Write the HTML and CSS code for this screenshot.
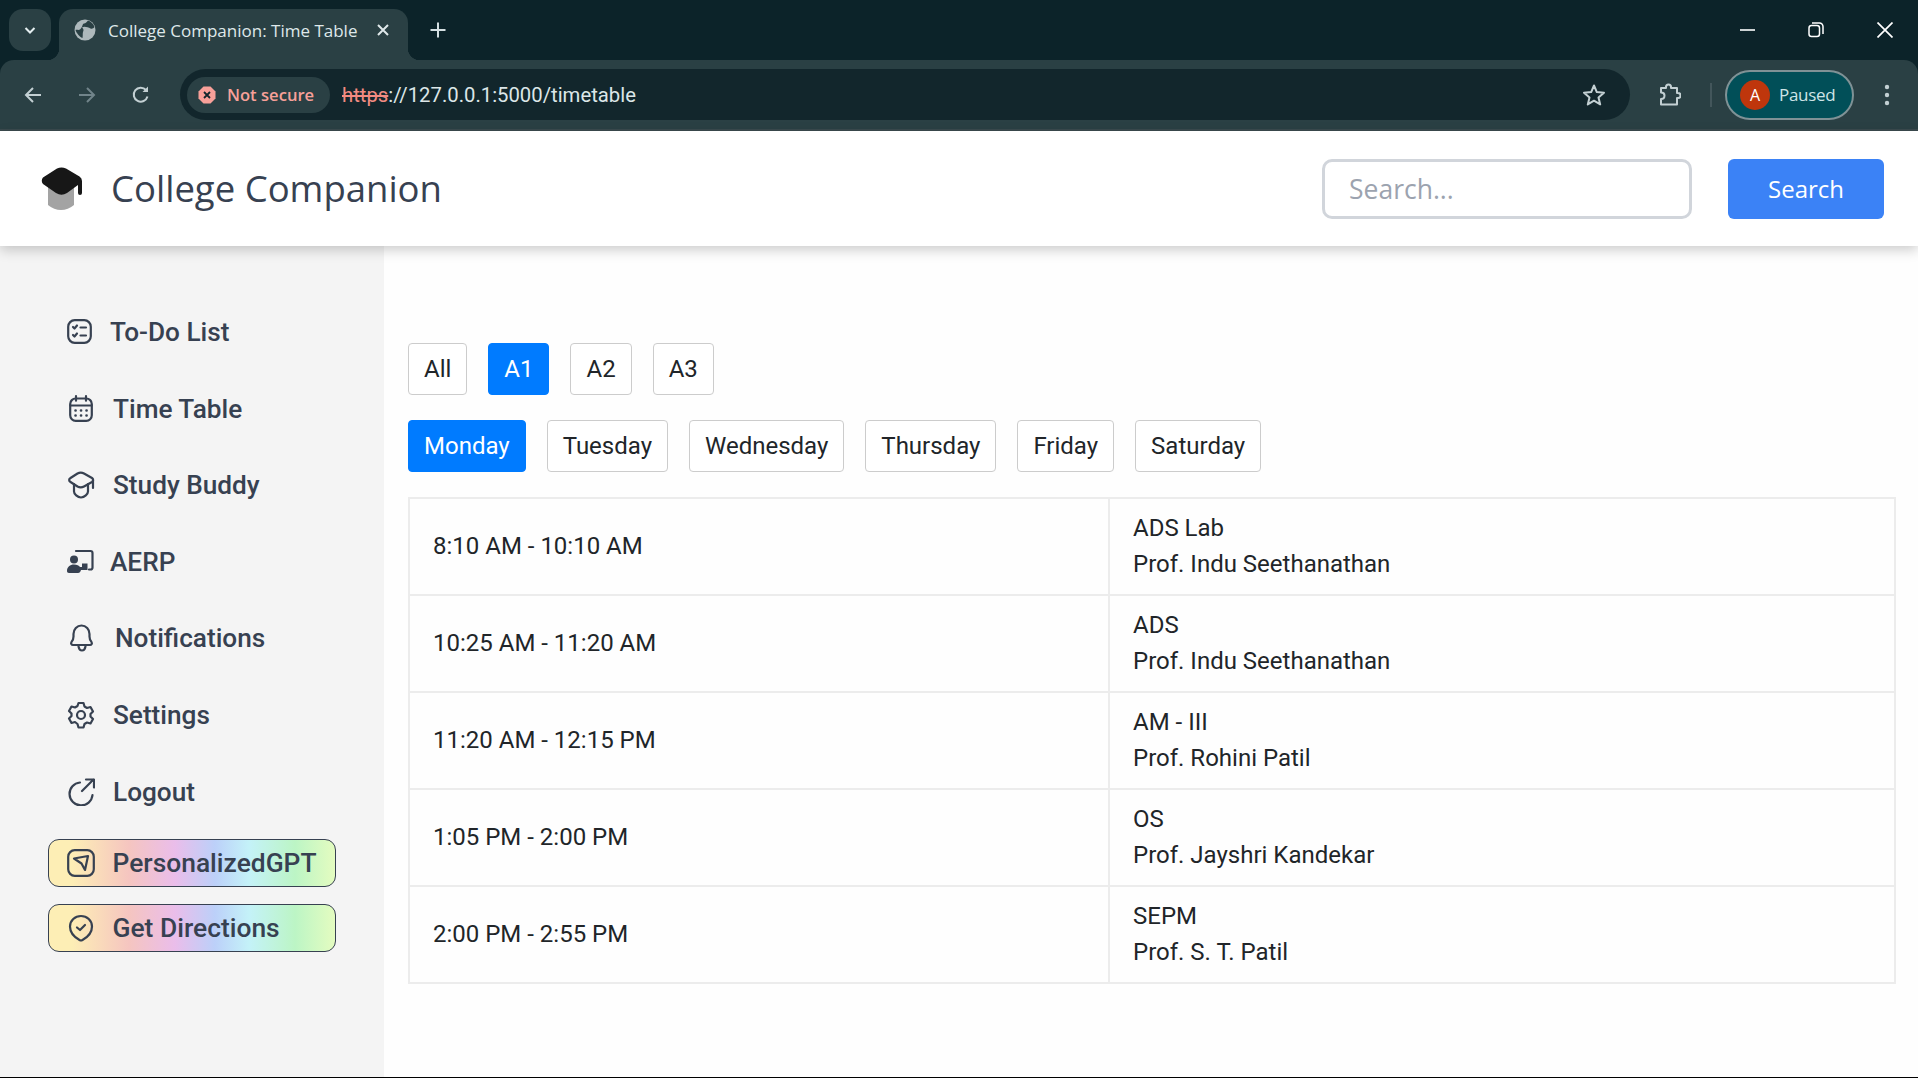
FILE: index.html
```html
<!DOCTYPE html>
<html lang="en">
<head>
<meta charset="utf-8">
<title>College Companion: Time Table</title>
<link rel="stylesheet" href="styles.css">
</head>
<body>
<div class="browser">
  <div class="tabstrip">
    <div class="tabsearch">
      <svg width="16" height="16" viewBox="0 0 16 16"><path d="M3.500 6 8 10.500 12.500 6" fill="none" stroke="#e4eef0" stroke-width="2"/></svg>
    </div>
    <div class="tab">
      <svg class="tab-globe" width="22" height="22" viewBox="0 0 22 22"><circle cx="11" cy="11" r="10.500" fill="#aeb9bc"/><path d="M14 1.500c3 1 5.500 3.500 6.500 6.500-1 1.500-2.500 2-4 1.500-2.500-1-6-2.500-8.500-1 1.500 1 2 3 1 4.500-.5 1.500 0 3-.5 6-3-1-6-5-7-8 1.500-.5 3 .5 4.500-.5C9 8 8 5 10 4.500c1.500 0 3-1.500 4-3z" fill="#2a4044"/></svg>
      <span class="tab-title">College Companion: Time Table</span>
      <svg class="tab-close" width="14" height="14" viewBox="0 0 14 14"><path d="M2 2 12 12M12 2 2 12" stroke="#dfe8ea" stroke-width="2"/></svg>
    </div>
    <svg class="tab-new" width="18" height="18" viewBox="0 0 18 18"><path d="M9 1.500v15M1.500 9h15" stroke="#d5e0e2" stroke-width="2"/></svg>
    <div class="window-controls">
      <svg width="16" height="16" viewBox="0 0 16 16"><path d="M1 8h15" stroke="#fff" stroke-width="1.600"/></svg>
      <svg width="16" height="16" viewBox="0 0 16 16"><rect x="1" y="3.500" width="10.500" height="11" rx="2.500" fill="none" stroke="#fff" stroke-width="1.500"/><path d="M4 1h7.500A3.500 3.500 0 0 1 15 4.500V12" fill="none" stroke="#fff" stroke-width="1.500"/></svg>
      <svg width="16" height="16" viewBox="0 0 16 16"><path d="M.5.500 15.500 15.500M15.500.500.500 15.500" stroke="#fff" stroke-width="1.700"/></svg>
    </div>
  </div>
  <div class="toolbar">
    <svg class="tool tool-back" width="20" height="20" viewBox="0 0 20 20"><path d="M18 10H3M10 3l-7 7 7 7" fill="none" stroke="#c3d0d3" stroke-width="2"/></svg>
    <svg class="tool tool-forward" width="20" height="20" viewBox="0 0 20 20"><path d="M2 10h15M10 3l7 7-7 7" fill="none" stroke="#71848a" stroke-width="2"/></svg>
    <svg class="tool tool-reload" width="20" height="20" viewBox="0 0 20 20"><path d="M16.500 11.500A7 7 0 1 1 15 5" fill="none" stroke="#c3d0d3" stroke-width="2"/><path d="M17 1.500V7h-5.500z" fill="#c3d0d3"/></svg>
    <div class="omnibox">
      <div class="chip">
        <svg width="18" height="18" viewBox="0 0 18 18"><path d="M5.500 .5h7l5 5v7l-5 5h-7l-5-5v-7z" fill="#f8a099"/><path d="M6 6l6 6M12 6l-6 6" stroke="#12262c" stroke-width="1.800"/></svg>
        <span>Not secure</span>
      </div>
      <div class="url"><span class="url-scheme">https</span><span class="url-rest">://127.0.0.1:5000/timetable</span></div>
      <svg class="star" width="24" height="24" viewBox="0 0 24 24"><path d="M12 2.500l2.800 6.600 7.200.6-5.500 4.700 1.700 7-6.200-3.700-6.200 3.700 1.700-7L2 9.700l7.200-.6z" fill="none" stroke="#c3d0d3" stroke-width="2" stroke-linejoin="round"/></svg>
    </div>
    <svg class="ext" width="22" height="24" viewBox="0 0 22 24"><path d="M2 5h5V4a2.500 2.500 0 0 1 5 0v1h6v5h1a2.500 2.500 0 0 1 0 5h-1v6.500H2V16c2.500 0 3.500-1.500 3.500-3.500S4 9.500 2 9.500z" fill="none" stroke="#c3d0d3" stroke-width="2" stroke-linejoin="round"/></svg>
    <div class="sep"></div>
    <div class="profile">
      <span class="avatar">A</span>
      <span class="paused">Paused</span>
    </div>
    <svg class="dots" width="6" height="22" viewBox="0 0 6 22"><circle cx="3" cy="3" r="2.200" fill="#c3d0d3"/><circle cx="3" cy="11" r="2.200" fill="#c3d0d3"/><circle cx="3" cy="19" r="2.200" fill="#c3d0d3"/></svg>
  </div>
</div>

<header class="topbar">
  <svg class="logo" width="42" height="44" viewBox="0 0 42 44">
    <path d="M7 18H33V38Q27 43 20 43 13 43 7 38Z" fill="#a3a3a3"/>
    <path d="M16 1.500Q20.500-.5 25 1.500L38.500 9.500Q41 11 41 14V26A2 2 0 0 1 37 26V18L26 26Q20.500 29.500 15 26L2 17Q-.5 13.500 2 10.500Z" fill="#171717"/>
  </svg>
  <h1 class="brand">College Companion</h1>
  <input class="search-input" type="text" placeholder="Search...">
  <button class="search-btn" type="button">Search</button>
</header>

<div class="layout">
  <aside class="sidebar">
    <nav class="nav">
      <a class="nav-item">
        <svg class="icon" width="25" height="25" viewBox="0 0 25 25"><rect x="1.200" y="1.200" width="22.600" height="22.600" rx="6.500"/><path d="M6 8l1.500 1.500L10 6.500M13.500 8.500H19M6 16l1.500 1.500L10 14.500M13.500 16.500H19"/></svg>
        <span>To-Do List</span>
      </a>
      <a class="nav-item">
        <svg class="icon" width="28" height="28" viewBox="0 0 28 28"><rect x="3.200" y="3.500" width="21.600" height="22.300" rx="5.500"/><path d="M3.500 10.500h21M9 1.200v4.500M19 1.200v4.500"/><path class="dots-grid" d="M8.500 15.500h.1M14 15.500h.1M19.500 15.500h.1M8.500 20.500h.1M14 20.500h.1M19.500 20.500h.1"/></svg>
        <span>Time Table</span>
      </a>
      <a class="nav-item">
        <svg class="icon" width="28" height="28" viewBox="0 0 28 28"><path d="M10.500 2.500c2.300-1.300 4.200-1.300 6.500 0l8 4.500c1.500 1 1.500 3 0 4l-8 4.500c-2.300 1.300-4.200 1.300-6.500 0L3.500 11c-1.800-1-1.800-3 0-4z"/><path d="M7 13v7.500c0 2.500 3.500 6 7 6s7-3.500 7-6V13M26 9v8"/></svg>
        <span>Study Buddy</span>
      </a>
      <a class="nav-item">
        <svg class="icon icon-tight" width="27" height="25" viewBox="0 0 27 25"><path d="M9 2h14.500a2 2 0 0 1 2 2v14.500a2 2 0 0 1-2 2H22"/><circle class="solid" cx="7" cy="10.500" r="4"/><path class="solid" d="M0 22c0-4 3-6.500 7-6.500 3 0 5 1 6 2.500h2v-3.500h5.500V21H14c-.500 2-1.500 3-3 3H2c-1.300 0-2-.7-2-2z"/></svg>
        <span>AERP</span>
      </a>
      <a class="nav-item">
        <svg class="icon" width="30" height="28" viewBox="0 0 30 28"><path d="M6 21c-1.500 0-2.500-1.500-1.500-3 1.500-1.500 2-3 2-5.500V10c0-4.500 3.500-8.500 8-8.500s8 4 8 8.500v2.500c0 2.500.5 4 2 5.500 1 1.500 0 3-1.500 3z"/><path d="M11.500 22.500c.5 2.500 2 4 3.500 4s3-1.500 3.500-4"/></svg>
        <span>Notifications</span>
      </a>
      <a class="nav-item">
        <svg class="icon" width="28" height="28" viewBox="0 0 28 28"><circle cx="14" cy="14" r="4"/><path d="M11.500 2h5l1 3.500 2.500 1.500 3.500-1 2.500 4.500-2.500 2.500v2.500l2.500 2.500-2.500 4.500-3.500-1-2.500 1.500-1 3.500h-5l-1-3.500L8 21l-3.500 1L2 17.500 4.500 15v-2.500L2 10l2.500-4.500L8 6.500l2.500-1.500z" stroke-linejoin="round"/></svg>
        <span>Settings</span>
      </a>
      <a class="nav-item">
        <svg class="icon" width="28" height="28" viewBox="0 0 28 28"><path d="M13 4.500A11.500 11.500 0 1 0 25.500 17"/><path d="M15 13 26.500 1.500M19 1.500h8v8"/></svg>
        <span>Logout</span>
      </a>
    </nav>
    <a class="gradient-item gradient-item-first">
      <svg class="icon" width="28" height="28" viewBox="0 0 28 28"><rect x="1.200" y="1.200" width="25.600" height="25.600" rx="6.500"/><path d="M7 9.500l14-2.500-3 14-3.500-6.500z" stroke-linejoin="round"/></svg>
      <span>PersonalizedGPT</span>
    </a>
    <a class="gradient-item">
      <svg class="icon" width="28" height="28" viewBox="0 0 28 28"><path d="M14 2c6 0 11 4.500 11 10.500 0 6-5 11-9.500 13.500-1 .5-2 .5-3 0C8 23.500 3 18.500 3 12.500 3 6.500 8 2 14 2z"/><path d="M10 13.500l3 2.500 5-5"/></svg>
      <span>Get Directions</span>
    </a>
  </aside>

  <main class="content">
    <div class="filters">
      <button class="pill" type="button">All</button>
      <button class="pill pill-active" type="button">A1</button>
      <button class="pill" type="button">A2</button>
      <button class="pill" type="button">A3</button>
    </div>
    <div class="filters">
      <button class="pill pill-active" type="button">Monday</button>
      <button class="pill" type="button">Tuesday</button>
      <button class="pill" type="button">Wednesday</button>
      <button class="pill" type="button">Thursday</button>
      <button class="pill" type="button">Friday</button>
      <button class="pill" type="button">Saturday</button>
    </div>
    <table class="timetable">
      <tbody>
        <tr><td class="col-time">8:10 AM - 10:10 AM</td><td>ADS Lab<br>Prof. Indu Seethanathan</td></tr>
        <tr><td class="col-time">10:25 AM - 11:20 AM</td><td>ADS<br>Prof. Indu Seethanathan</td></tr>
        <tr><td class="col-time">11:20 AM - 12:15 PM</td><td>AM - III<br>Prof. Rohini Patil</td></tr>
        <tr><td class="col-time">1:05 PM - 2:00 PM</td><td>OS<br>Prof. Jayshri Kandekar</td></tr>
        <tr><td class="col-time">2:00 PM - 2:55 PM</td><td>SEPM<br>Prof. S. T. Patil</td></tr>
      </tbody>
    </table>
  </main>
</div>
</body>
</html>
```

FILE: styles.css
```css
* { box-sizing: border-box; }
html, body { height: 100%; }
body {
  margin: 0;
  height: 1078px;
  overflow: hidden;
  display: flex;
  flex-direction: column;
  background: #fefefe;
  border-bottom: 1px solid #000;
  font-family: Roboto, "Liberation Sans", sans-serif;
}

/* browser chrome */
.browser { flex: none; background: #0c2329; }
.tabstrip { height: 60px; display: flex; align-items: flex-start; padding: 9px 0 0 9px; }
.tabsearch {
  width: 42px; height: 42px; border-radius: 14px; background: #2a4044;
  display: flex; align-items: center; justify-content: center; margin-right: 8px;
}
.tab {
  position: relative; width: 349px; height: 51px; background: #2a4044;
  border-radius: 14px 14px 0 0; display: flex; align-items: center; padding: 0 0 9px 15px;
}
.tab::before, .tab::after { content: ""; position: absolute; bottom: 0; width: 12px; height: 12px; }
.tab::before { left: -12px; background: radial-gradient(circle at 0 0, transparent 12px, #2a4044 12.500px); }
.tab::after { right: -12px; background: radial-gradient(circle at 100% 0, transparent 12px, #2a4044 12.500px); }
.tab-title {
  margin-left: 12px; color: #dfe8ea; font: 400 17px "Open Sans", sans-serif; white-space: nowrap;
}
.tab-close { margin-left: 19px; }
.tab-new { margin: 12px 0 0 21px; }
.window-controls { margin-left: auto; display: flex; gap: 53px; padding: 13px 25px 0 0; }

.toolbar {
  height: 71px; background: #2a4044; border-radius: 14px 14px 0 0;
  display: flex; align-items: center; padding: 0 0 0 23px; border-bottom: 2px solid #3b4a4e;
}
.tool { flex: none; }
.tool-forward { margin-left: 34px; }
.tool-reload { margin-left: 34px; }
.omnibox {
  margin-left: 29px; width: 1450px; height: 51px; border-radius: 26px; background: #12262c;
  display: flex; align-items: center; padding-left: 7px;
}
.chip {
  height: 36px; width: 143px; border-radius: 18px; background: #2a4044;
  display: flex; align-items: center; gap: 11px; padding-left: 11px;
  color: #f8a099; font: 600 16.600px "Open Sans", sans-serif; white-space: nowrap;
}
.url { margin-left: 12px; font: 400 20.300px Roboto, sans-serif; white-space: nowrap; }
.url-scheme { color: #f28b82; text-decoration: line-through; }
.url-rest { color: #dce6e8; }
.star { margin-left: auto; margin-right: 24px; }
.ext { margin-left: 29px; flex: none; }
.sep { width: 2px; height: 24px; background: #43565b; margin-left: 29px; flex: none; }
.profile {
  margin-left: 13px; width: 129px; height: 50px; border-radius: 25px; background: #014f58;
  border: 2px solid #7f9296; display: flex; align-items: center; padding-left: 13px; gap: 9px; flex: none;
}
.avatar {
  width: 30px; height: 30px; border-radius: 50%; background: #bf360c; color: #fff;
  display: flex; align-items: center; justify-content: center; font: 400 16px "Open Sans", sans-serif;
}
.paused { color: #cfe4e7; font: 400 17px "Open Sans", sans-serif; letter-spacing: -.3px; }
.dots { margin-left: 30px; flex: none; }

/* app header */
.topbar {
  position: relative; z-index: 2; flex: none; height: 115px; background: #fff;
  box-shadow: 0 4px 12px rgba(0, 0, 0, .2);
  display: flex; align-items: center; padding: 0 34px 0 41px;
}
.logo { flex: none; }
.brand { margin: 0 0 1px 28px; font: 400 36.500px "Open Sans", sans-serif; color: #374151; }
.search-input {
  margin-left: auto; width: 370px; height: 60px; border: 3px solid #d1d5db; border-radius: 10px;
  padding: 0 24px; font: 400 26.500px "Open Sans", sans-serif; color: #374151; background: #fff; outline: none;
}
.search-input::placeholder { color: #9ca3af; opacity: 1; }
.search-btn {
  margin-left: 36px; width: 156px; height: 60px; border: 0; border-radius: 6px; background: #3b82f6;
  color: #fff; font: 400 24px "Open Sans", sans-serif;
}

/* layout */
.layout { flex: 1; display: flex; min-height: 0; }
.sidebar { flex: none; width: 384px; background: #f4f4f4; padding: 47.700px 0 0 48px; }
.nav { display: flex; flex-direction: column; margin-bottom: 9.300px; }
.nav-item {
  height: 76.600px; display: flex; align-items: center; gap: 18px; padding-left: 19px;
  color: #374151; font-weight: 500; font-size: 26.200px;
}
.icon { flex: none; fill: none; stroke: #374151; stroke-width: 2.200; stroke-linecap: round; stroke-linejoin: round; }
.icon .solid { fill: #374151; stroke: none; }
.icon .dots-grid { stroke-width: 2.600; }
.nav-item .icon-tight { margin-right: -2px; }
.gradient-item {
  width: 288px; height: 47.500px; margin-top: 17.500px; display: flex; align-items: center; gap: 17.500px; padding-left: 18px;
  border: 1.500px solid #374151; border-radius: 11px;
  background: linear-gradient(90deg, #fdeeb5 0%, #fdeeb5 8%, #f5c5c0 28%, #eabdea 44%, #bcd0f9 58%, #c4f2f8 70%, #bcf5c5 86%, #e4fcc0 100%);
  color: #374151; font-weight: 500; font-size: 26.400px;
}
.gradient-item-first { margin-top: 0; }

/* main */
.content { flex: 1; min-width: 0; padding: 97px 22px 0 24px; }
.filters { display: flex; gap: 21px; margin-bottom: 25px; }
.pill {
  height: 52px; padding: 0 15px; background: #fff; border: 1.500px solid #ccc; border-radius: 4px;
  color: #212529; font: 400 24px Roboto, sans-serif;
}
.pill-active { background: #007bff; border-color: #007bff; color: #fff; }
.timetable { width: 100%; border-collapse: collapse; table-layout: fixed; color: #212529; font-size: 24px; line-height: 36px; }
.timetable td { padding: 10.500px 23px 12.500px; border: 2px solid #ececec; }
.col-time { width: 700px; }
```
